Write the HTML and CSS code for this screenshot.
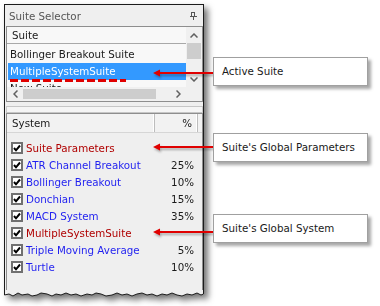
FILE: index.html
```html
<!DOCTYPE html>
<html lang="en">
<head>
    <meta charset="UTF-8">
    <title>Suite Selector</title>
    <link rel="stylesheet" href="styles.css">
</head>
<body>
<div class="page">
    <div class="panel-wrap">
        <div class="panel">
            <div class="titlebar">
                <span>Suite Selector</span>
                <svg class="pin" width="7" height="8" viewBox="0 0 7 8">
                    <rect x="1.5" y="0.5" width="3" height="4" fill="none" stroke="#555"/>
                    <rect x="4" y="0.5" width="1" height="4" fill="#555"/>
                    <line x1="0" y1="4.5" x2="7" y2="4.5" stroke="#555"/>
                    <line x1="3.5" y1="5" x2="3.5" y2="8" stroke="#555"/>
                </svg>
            </div>

            <div class="suite-box">
                <div class="suite-main">
                    <div class="suite-view">
                        <div class="col-head">Suite</div>
                        <div class="suite-rows">
                            <div class="suite-row">Bollinger Breakout Suite</div>
                            <div class="suite-row selected">MultipleSystemSuite</div>
                            <div class="suite-row">New Suite</div>
                        </div>
                    </div>
                    <div class="vscroll">
                        <div class="sb-btn">
                            <svg width="8" height="5" viewBox="0 0 8 5"><polyline points="0.5,4.5 4,1 7.5,4.5" fill="none" stroke="#606060" stroke-width="1.5"/></svg>
                        </div>
                        <div class="vthumb"></div>
                        <div class="sb-track"></div>
                        <div class="sb-btn">
                            <svg width="8" height="5" viewBox="0 0 8 5"><polyline points="0.5,0.5 4,4 7.5,0.5" fill="none" stroke="#606060" stroke-width="1.5"/></svg>
                        </div>
                    </div>
                </div>
                <div class="hscroll-row">
                    <div class="hscroll">
                        <div class="sb-btn wide">
                            <svg width="5" height="8" viewBox="0 0 5 8"><polyline points="4.5,0.5 1,4 4.5,7.5" fill="none" stroke="#606060" stroke-width="1.5"/></svg>
                        </div>
                        <div class="hthumb"></div>
                        <div class="sb-track"></div>
                        <div class="sb-btn wide">
                            <svg width="5" height="8" viewBox="0 0 5 8"><polyline points="0.5,0.5 4,4 0.5,7.5" fill="none" stroke="#606060" stroke-width="1.5"/></svg>
                        </div>
                    </div>
                    <div class="corner"></div>
                </div>
            </div>

            <div class="splitter"></div>

            <div class="system-box">
                <div class="sys-head">
                    <div class="h-name">System</div>
                    <div class="h-pct">%</div>
                    <div class="h-end"></div>
                </div>
                <div class="sys-rows" id="sysRows"></div>
            </div>
        </div>
        <svg class="torn" width="200" height="9" viewBox="0 0 200 9">
            <path d="M0,0 L200,0 L200,4 L197,5 L193,3 L188,5 L183,4 L178,6 L173,5 L168,3 L163,5 L158,4 L153,6 L148,4 L143,5 L138,3 L133,4 L128,6 L123,4 L118,5 L113,3 L108,5 L102,6 L97,4 L92,3 L88,5 L83,4 L77,6 L72,4 L67,5 L62,3 L57,5 L52,4 L48,6 L43,4 L37,3 L33,5 L28,6 L24,4 L18,5 L14,3 L9,6 L5,4 L0,5 Z" fill="#efefef"/>
            <polyline points="0.5,0 0.5,5 5,4 9,6 14,3 18,5 24,4 28,6 33,5 37,3 43,4 48,6 52,4 57,5 62,3 67,5 72,4 77,6 83,4 88,5 92,3 97,4 102,6 108,5 113,3 118,5 123,4 128,6 133,4 138,3 143,5 148,4 153,6 158,4 163,5 168,3 173,5 178,6 183,4 188,5 193,3 197,5 199.5,4 199.5,0" fill="none" stroke="#1c1c1c" stroke-width="1"/>
        </svg>
    </div>

    <!-- callouts -->
    <svg class="arrow arrow-1" width="62" height="10" viewBox="0 0 62 10">
        <polygon points="1,5 8,1.5 8,8.5" fill="#e00000"/>
        <rect x="6" y="4" width="56" height="2" fill="#e00000"/>
    </svg>
    <div class="callout callout-1">Active Suite</div>

    <svg class="arrow arrow-2" width="62" height="10" viewBox="0 0 62 10">
        <polygon points="1,5 8,1.5 8,8.5" fill="#e00000"/>
        <rect x="6" y="4" width="56" height="2" fill="#e00000"/>
    </svg>
    <div class="callout callout-2">Suite's Global Parameters</div>

    <svg class="arrow arrow-3" width="62" height="10" viewBox="0 0 62 10">
        <polygon points="1,5 8,1.5 8,8.5" fill="#e00000"/>
        <rect x="6" y="4" width="56" height="2" fill="#e00000"/>
    </svg>
    <div class="callout callout-3">Suite's Global System</div>
</div>

<script>
    const systems = [
        { name: 'Suite Parameters', pct: '', kind: 'global' },
        { name: 'ATR Channel Breakout', pct: '25%', kind: 'member' },
        { name: 'Bollinger Breakout', pct: '10%', kind: 'member' },
        { name: 'Donchian', pct: '15%', kind: 'member' },
        { name: 'MACD System', pct: '35%', kind: 'member' },
        { name: 'MultipleSystemSuite', pct: '', kind: 'global' },
        { name: 'Triple Moving Average', pct: '5%', kind: 'member' },
        { name: 'Turtle', pct: '10%', kind: 'member' },
    ];

    const checkSvg = '<svg class="check" width="12" height="12" viewBox="0 0 12 12">' +
        '<rect x="1" y="1" width="10" height="10" fill="#fff" stroke="#707070" stroke-width="2"/>' +
        '<polyline points="3,6 5,8.3 9,3.5" fill="none" stroke="#000" stroke-width="2"/></svg>';

    const rowsEl = document.getElementById('sysRows');
    rowsEl.innerHTML = systems.map(s =>
        `<div class="sys-row">${checkSvg}<span class="sys-name ${s.kind}">${s.name}</span><span class="sys-pct">${s.pct}</span></div>`
    ).join('');
</script>
</body>
</html>
```

FILE: styles.css
```css
* {
    box-sizing: border-box;
}

html, body {
    margin: 0;
    padding: 0;
}

body {
    width: 380px;
    height: 306px;
    overflow: hidden;
    background: #ffffff;
    font-family: "DejaVu Sans", Verdana, sans-serif;
    font-size: 10.3px;
    color: #1a1a1a;
}

.page {
    position: relative;
    width: 380px;
    height: 306px;
    padding: 4px 0 0 4px;
}

.panel-wrap {
    width: 200px;
    filter: drop-shadow(4px 4px 3px rgba(0, 0, 0, 0.55));
}

.panel {
    height: 286px;
    background: #efefef;
    border: 1px solid #1c1c1c;
    border-bottom: none;
    display: flex;
    flex-direction: column;
}

.torn {
    display: block;
}

.titlebar {
    height: 21px;
    display: flex;
    align-items: center;
    justify-content: space-between;
    padding: 0 6px 0 4px;
    color: #555;
}

/* suite list */
.suite-box {
    margin-left: 1px;
    height: 76px;
    border: 1px solid #8e8e8e;
    background: #f8f8f8;
    display: flex;
    flex-direction: column;
}

.suite-main {
    display: flex;
    height: 60px;
}

.suite-view {
    flex: 1;
    overflow: hidden;
}

.col-head {
    height: 17px;
    line-height: 16px;
    padding-left: 5px;
    border-bottom: 1px solid #a8a8a8;
}

.suite-rows {
    padding: 2px 0 0 1px;
}

.suite-row {
    height: 17px;
    line-height: 17px;
    padding-left: 2px;
    white-space: nowrap;
}

.suite-row.selected {
    position: relative;
    background: #3399ff;
    color: #ffffff;
}

.suite-row.selected::after {
    content: "";
    position: absolute;
    left: 2px;
    top: 16px;
    width: 116px;
    height: 3px;
    background: repeating-linear-gradient(90deg, #e00000 0 8px, transparent 8px 11px);
}

/* scrollbars */
.vscroll {
    width: 16px;
    display: flex;
    flex-direction: column;
    background: #f0f0f0;
}

.sb-btn {
    height: 16px;
    display: flex;
    align-items: center;
    justify-content: center;
}

.sb-btn.wide {
    height: 14px;
    width: 16px;
}

.sb-track {
    flex: 1;
}

.vthumb {
    height: 16px;
    margin: 0 1px;
    background: #cdcdcd;
}

.hscroll-row {
    display: flex;
    height: 14px;
}

.hscroll {
    flex: 1;
    display: flex;
    align-items: center;
    background: #f0f0f0;
}

.hthumb {
    width: 133px;
    height: 10px;
    background: #cdcdcd;
}

.corner {
    width: 16px;
    background: #f0f0f0;
}

.splitter {
    margin: 4px 0 0 1px;
    height: 7px;
    border: 1px solid #c6c6c6;
    background: #f5f5f5;
}

/* system list */
.system-box {
    flex: 1;
    margin-left: 1px;
    border: 1px solid #8e8e8e;
    border-bottom: none;
    background: #efefef;
}

.sys-head {
    display: flex;
    height: 19px;
    border-bottom: 1px solid #d6d6d6;
    background: #f2f2f2;
}

.h-name {
    flex: 1;
    padding-left: 5px;
    line-height: 18px;
    border-right: 1px solid #bdbdbd;
    box-shadow: inset -1px 0 0 #ffffff;
}

.h-pct {
    width: 43px;
    padding-right: 5px;
    text-align: right;
    line-height: 18px;
    border-right: 1px solid #bdbdbd;
    box-shadow: inset -1px 0 0 #ffffff;
}

.h-end {
    width: 4px;
}

.sys-rows {
    padding-top: 6px;
}

.sys-row {
    display: flex;
    align-items: center;
    height: 17px;
    padding: 0 8px 0 4px;
}

.check {
    flex: none;
}

.sys-name {
    flex: 1;
    margin-left: 3px;
    white-space: nowrap;
}

.sys-name.member {
    color: #1f1ff0;
}

.sys-name.global {
    color: #b00000;
}

.sys-pct {
    color: #1a1a1a;
}

/* callouts */
.arrow {
    position: absolute;
    left: 152px;
    filter: drop-shadow(1px 2px 1px rgba(0, 0, 0, 0.3));
}

.arrow-1 { top: 68px; }
.arrow-2 { top: 142px; }
.arrow-3 { top: 227px; }

.callout {
    position: absolute;
    left: 213px;
    width: 155px;
    height: 29px;
    padding-left: 8px;
    line-height: 27px;
    border: 1px solid #a0a0a0;
    background: #ffffff;
    box-shadow: 3px 3px 3px rgba(0, 0, 0, 0.35);
}

.callout-1 { top: 57px; }
.callout-2 { top: 133px; }
.callout-3 { top: 214px; }
```
